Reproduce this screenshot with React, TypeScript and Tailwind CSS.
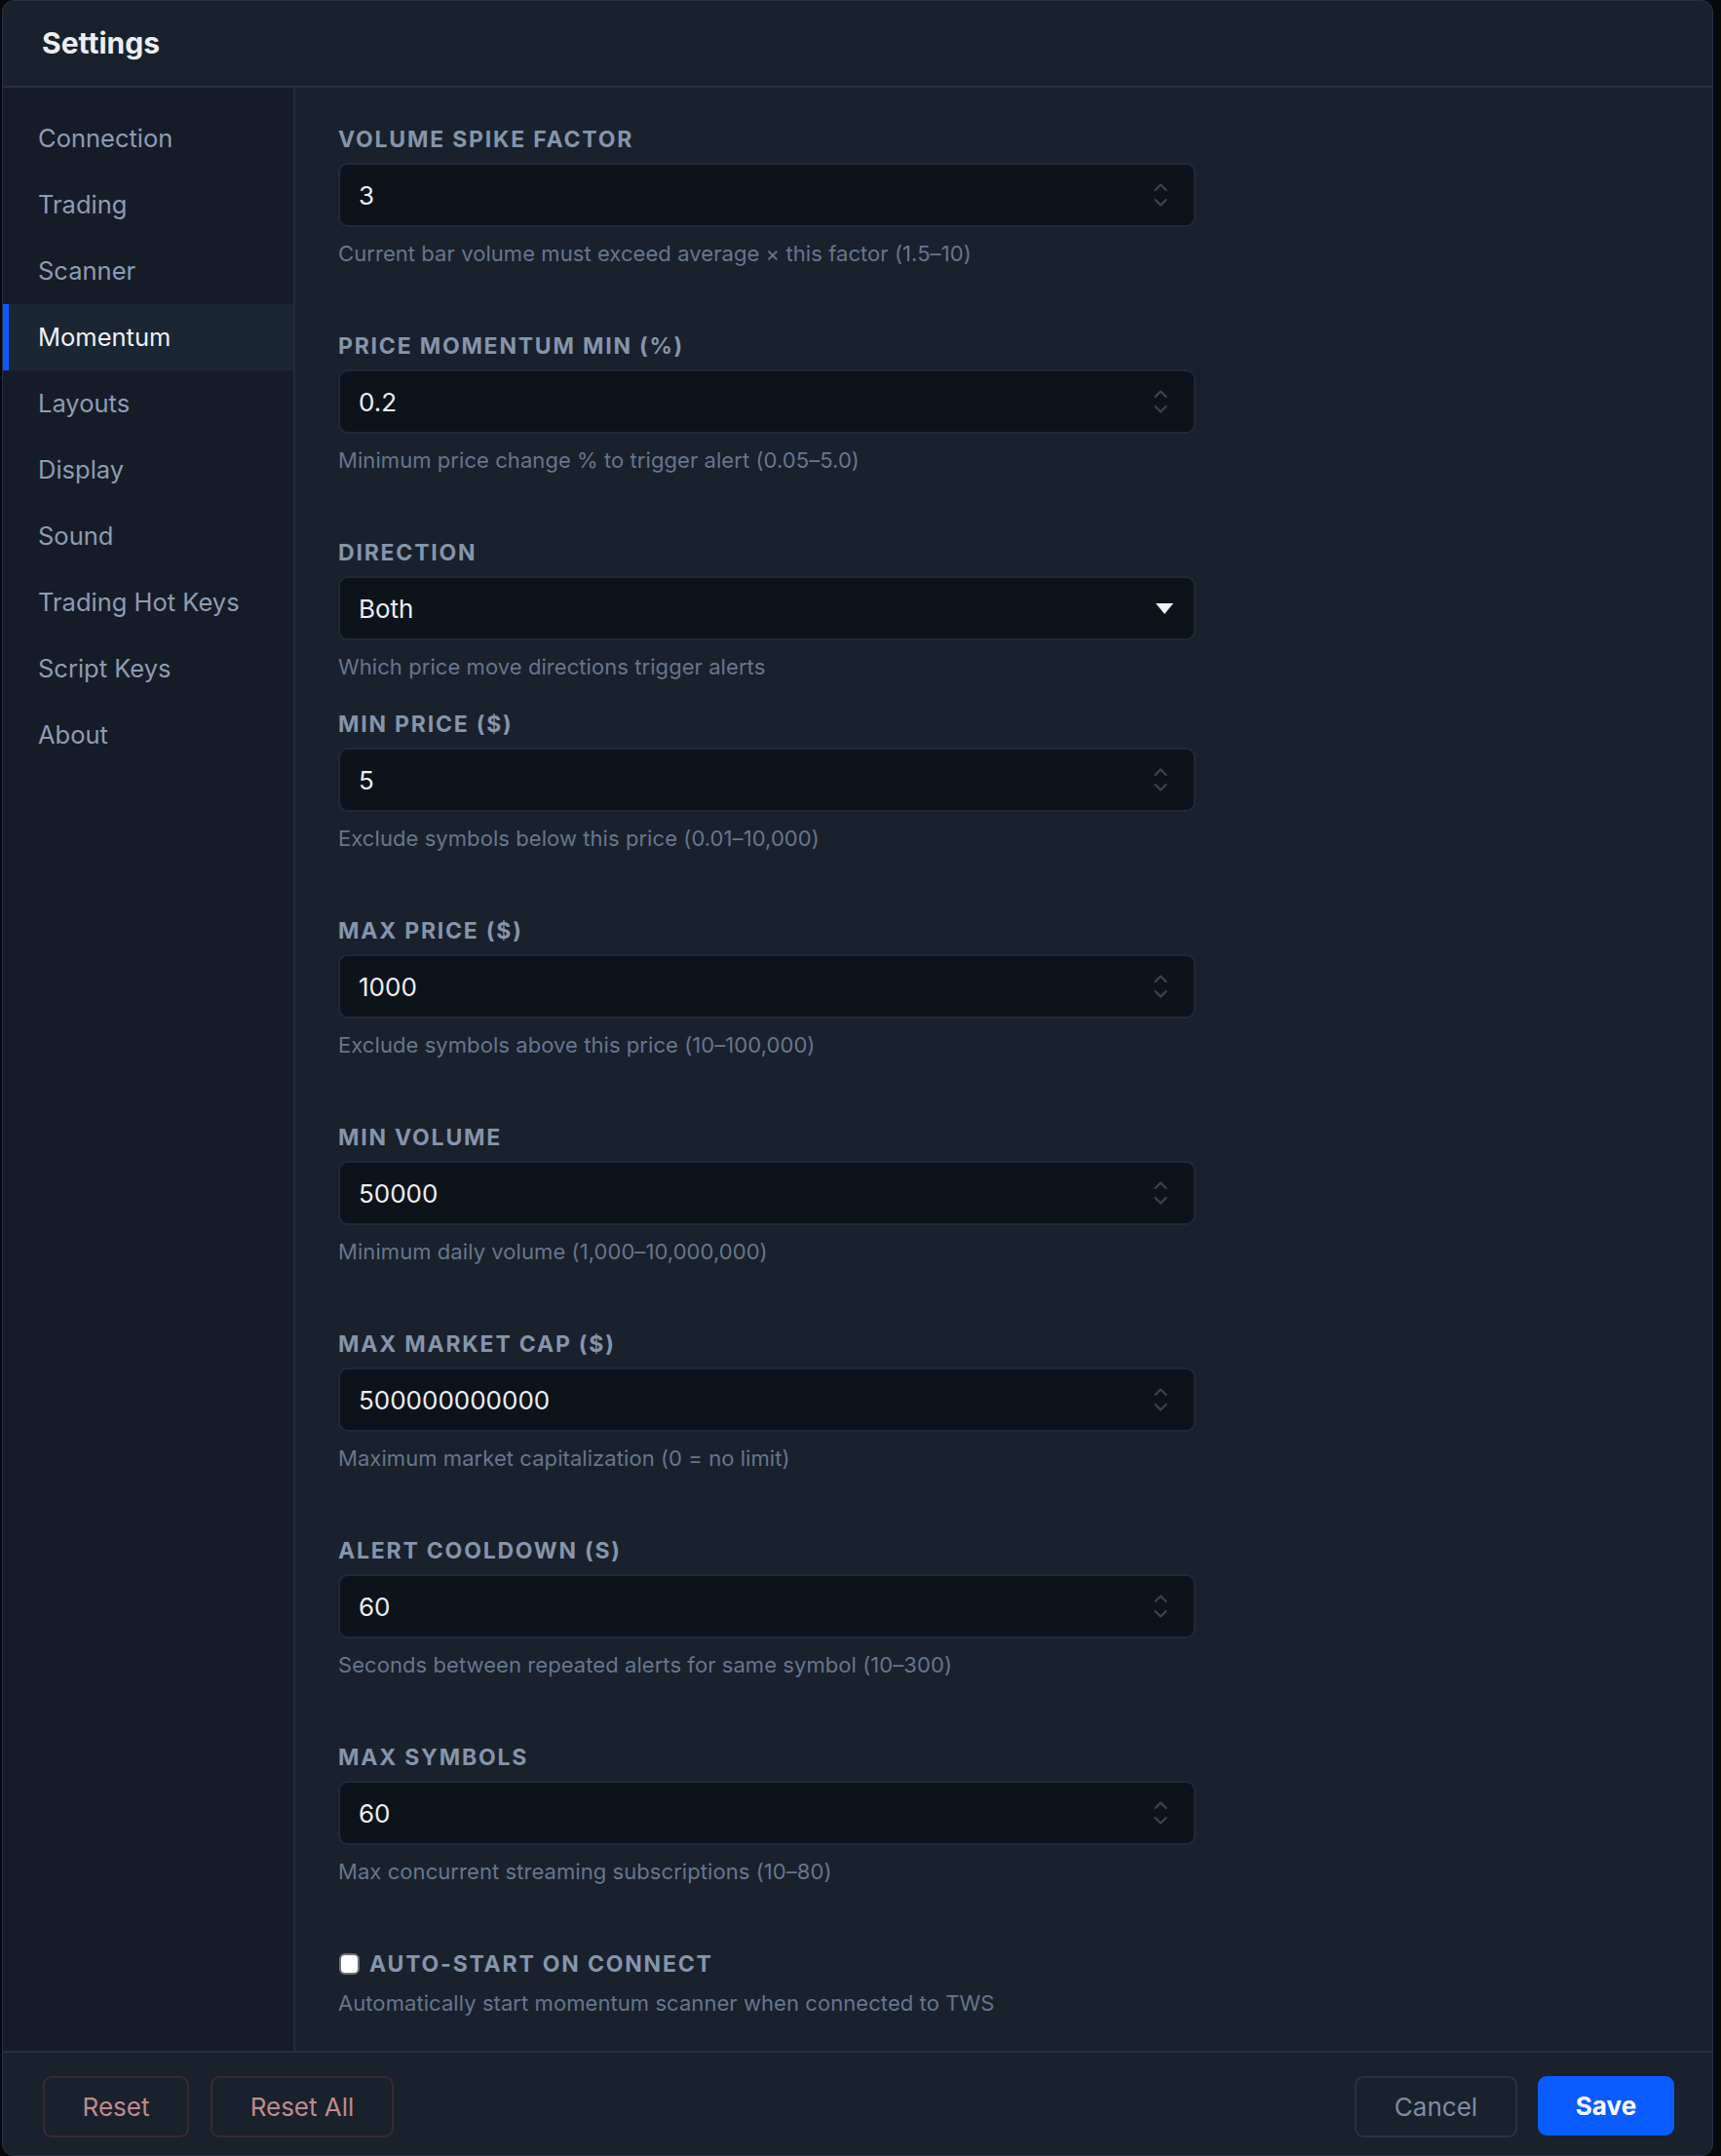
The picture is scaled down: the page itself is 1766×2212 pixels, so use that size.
import { useState } from "react";

interface NumberField {
  kind: "number";
  label: string;
  value: string;
  help: string;
}

interface SelectField {
  kind: "select";
  label: string;
  value: string;
  options: string[];
  help: string;
}

type Field = NumberField | SelectField;

const NAV = [
  "Connection",
  "Trading",
  "Scanner",
  "Momentum",
  "Layouts",
  "Display",
  "Sound",
  "Trading Hot Keys",
  "Script Keys",
  "About",
];

const FIELDS: Field[] = [
  { kind: "number", label: "Volume Spike Factor", value: "3", help: "Current bar volume must exceed average × this factor (1.5–10)" },
  { kind: "number", label: "Price Momentum Min (%)", value: "0.2", help: "Minimum price change % to trigger alert (0.05–5.0)" },
  { kind: "select", label: "Direction", value: "Both", options: ["Both", "Up", "Down"], help: "Which price move directions trigger alerts" },
  { kind: "number", label: "Min Price ($)", value: "5", help: "Exclude symbols below this price (0.01–10,000)" },
  { kind: "number", label: "Max Price ($)", value: "1000", help: "Exclude symbols above this price (10–100,000)" },
  { kind: "number", label: "Min Volume", value: "50000", help: "Minimum daily volume (1,000–10,000,000)" },
  { kind: "number", label: "Max Market Cap ($)", value: "500000000000", help: "Maximum market capitalization (0 = no limit)" },
  { kind: "number", label: "Alert Cooldown (s)", value: "60", help: "Seconds between repeated alerts for same symbol (10–300)" },
  { kind: "number", label: "Max Symbols", value: "60", help: "Max concurrent streaming subscriptions (10–80)" },
];

const FONT = "font-['Inter','Noto_Sans',sans-serif]";
const LABEL = "block text-[23px] leading-[30px] font-bold uppercase tracking-[0.078em] text-[#8595ab]";
const HELP = "text-[22px] leading-[30px] tracking-[0.003em] text-[#67768b]";

function Spinner() {
  return (
    <svg width="16" height="26" viewBox="0 0 16 26" fill="none" className="shrink-0">
      <path d="M2.5 8 L8 2.5 L13.5 8" stroke="#3a4450" strokeWidth="2.2" strokeLinecap="round" strokeLinejoin="round" />
      <path d="M2.5 18 L8 23.5 L13.5 18" stroke="#3a4450" strokeWidth="2.2" strokeLinecap="round" strokeLinejoin="round" />
    </svg>
  );
}

function FieldRow({ field }: { field: Field }) {
  const [value, setValue] = useState(field.value);

  return (
    <div className={field.kind === "number" ? "mb-[65px]" : "mb-[29px]"}>
      <label className={`${LABEL} mb-[9px]`}>{field.label}</label>
      <div className="flex h-[66px] w-[880px] items-center rounded-[10px] border-2 border-[#1e2a3a] bg-[#0d131b] pl-[19px] pr-[26px]">
        {field.kind === "number" ? (
          <>
            <input
              value={value}
              onChange={(e) => setValue(e.target.value)}
              className="min-w-0 flex-1 bg-transparent text-[26px] text-[#eceef1] outline-none"
            />
            <Spinner />
          </>
        ) : (
          <>
            <select
              value={value}
              onChange={(e) => setValue(e.target.value)}
              className="min-w-0 flex-1 appearance-none bg-transparent text-[26px] text-[#eceef1] outline-none"
            >
              {field.options.map((o) => (
                <option key={o} value={o}>{o}</option>
              ))}
            </select>
            <svg width="20" height="13" viewBox="0 0 20 13" className="mr-[-6px] shrink-0">
              <path d="M1 1 H19 L10 12 Z" fill="#f2f3f5" />
            </svg>
          </>
        )}
      </div>
      <p className={`${HELP} mt-[12px]`}>{field.help}</p>
    </div>
  );
}

export default function App() {
  const [active, setActive] = useState("Momentum");
  const [autoStart, setAutoStart] = useState(false);

  return (
    <div className={`${FONT} h-[2212px] w-[1766px] bg-[#06080b] pl-[2px]`}>
      <div className="flex h-[2212px] w-[1756px] flex-col overflow-hidden rounded-[12px] border border-[#263142] bg-[#19212d]">
        {/* Header */}
        <div className="flex h-[89px] shrink-0 items-center border-b-2 border-[#243042] pl-[40px]">
          <h2 className="text-[30px] font-bold text-[#eceef1]">Settings</h2>
        </div>

        {/* Body */}
        <div className="flex min-h-0 flex-1">
          <nav className="w-[300px] shrink-0 border-r-2 border-[#212c3c] bg-[#151c28] pt-[18px]">
            {NAV.map((item) => (
              <button
                key={item}
                onClick={() => setActive(item)}
                className={
                  active === item
                    ? "flex h-[68px] w-full items-center border-l-[6px] border-[#0a5cff] bg-[#1b2634] pl-[30px] text-left text-[25.5px] text-[#eef0f3]"
                    : "flex h-[68px] w-full items-center pl-[36px] text-left text-[25.5px] text-[#8e9cb1]"
                }
              >
                {item}
              </button>
            ))}
          </nav>

          <div className="min-w-0 flex-1 overflow-hidden pl-[44px] pt-[38px]">
            {FIELDS.map((f) => (
              <FieldRow key={f.label} field={f} />
            ))}

            <label className="mt-[2px] flex items-center gap-[10px]">
              <input
                type="checkbox"
                checked={autoStart}
                onChange={(e) => setAutoStart(e.target.checked)}
                className="ml-[1px] h-[22px] w-[21px] appearance-none rounded-[6px] border-2 border-[#6b6f76] bg-white"
              />
              <span className={LABEL}>Auto-start on connect</span>
            </label>
            <p className={`${HELP} mt-[10px]`}>Automatically start momentum scanner when connected to TWS</p>
          </div>
        </div>

        {/* Footer */}
        <div className="flex shrink-0 items-center justify-between border-t-2 border-[#243042] pb-[18px] pl-[41px] pr-[39px] pt-[24px]">
          <div className="flex gap-[22px]">
            <button className="h-[63px] w-[150px] rounded-[9px] border-2 border-[#3a2830] text-[26px] text-[#c08a8c]">Reset</button>
            <button className="h-[63px] w-[188px] rounded-[9px] border-2 border-[#3a2830] text-[26px] text-[#c08a8c]">Reset All</button>
          </div>
          <div className="flex gap-[21px]">
            <button className="h-[63px] w-[167px] rounded-[9px] border-2 border-[#273344] text-[26px] text-[#7e8da3]">Cancel</button>
            <button className="h-[61px] w-[140px] rounded-[9px] bg-[#0a5cff] text-[26px] font-bold text-white">Save</button>
          </div>
        </div>
      </div>
    </div>
  );
}
